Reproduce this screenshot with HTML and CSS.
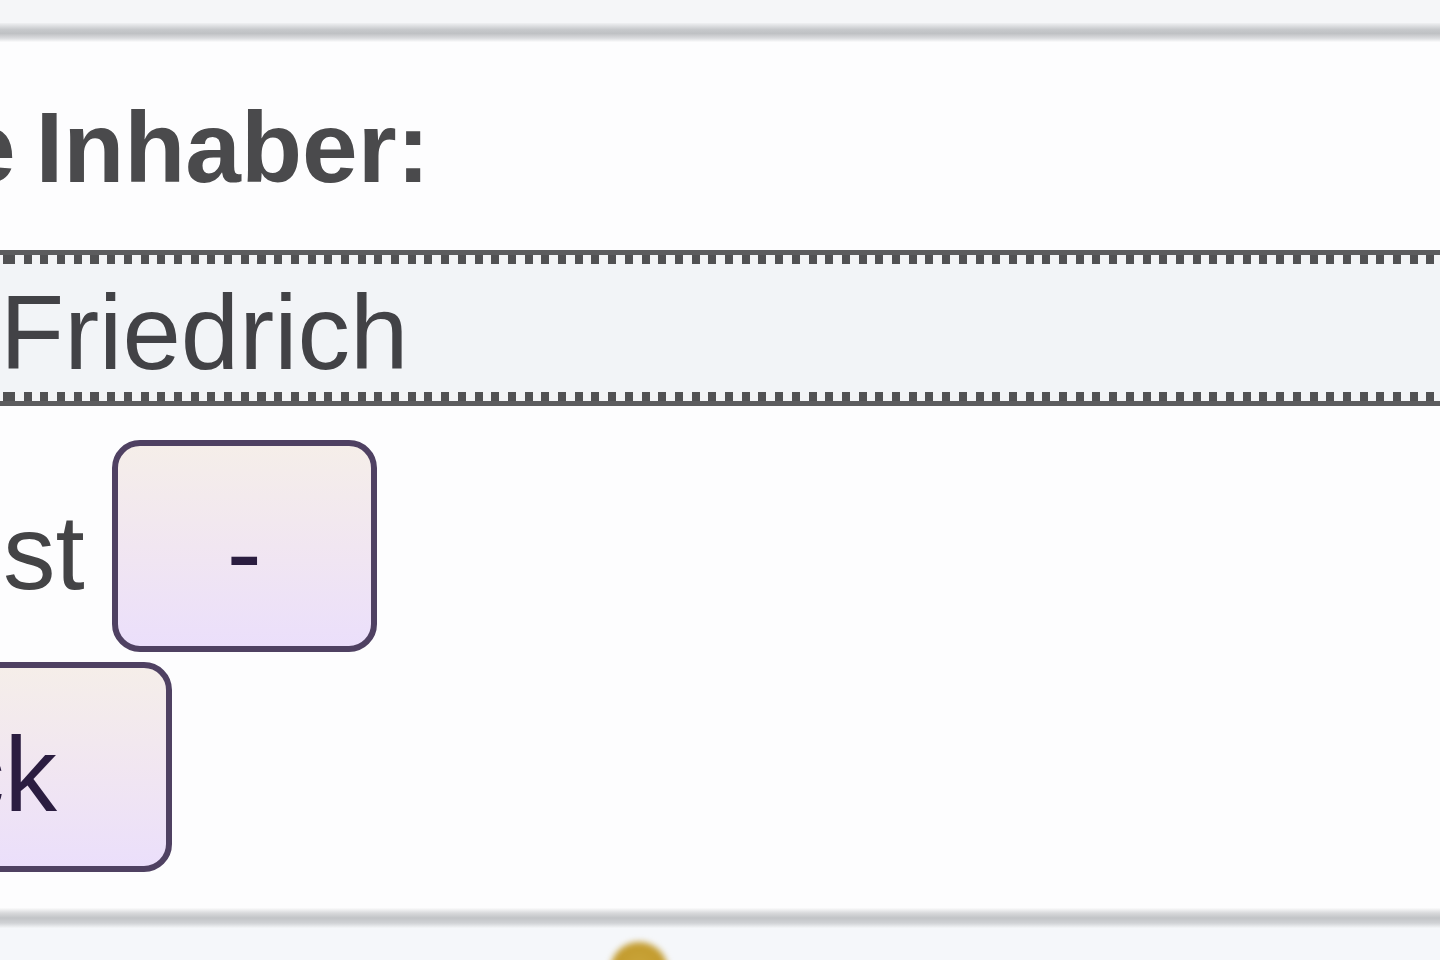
FILE: index.html
```html
<!DOCTYPE html>
<html lang="de">
<head>
<meta charset="utf-8">
<title>Inhaber</title>
<link rel="stylesheet" href="styles.css">
</head>
<body>
<div class="page">
  <div class="top-band"></div>
  <div class="rule"></div>
  <div class="label"><span class="label-text">e Inhaber:</span></div>
  <div class="field">
    <div class="field-dots"></div>
    <div class="field-value">Friedrich</div>
    <div class="field-dots"></div>
  </div>
  <div class="actions">
    <div class="action-row">
      <span class="action-text">st</span>
      <button class="btn" type="button">-</button>
    </div>
    <div class="action-row">
      <button class="btn btn-back" type="button">ck</button>
    </div>
  </div>
  <div class="rule rule-bottom"></div>
  <div class="footer"><div class="coin"></div></div>
</div>
</body>
</html>
```

FILE: styles.css
```css
html, body {
  margin: 0;
  padding: 0;
  background: #ffffff;
}

body {
  width: 1440px;
  height: 960px;
  overflow: hidden;
  font-family: "Liberation Sans", Arial, sans-serif;
}

.page {
  width: 1440px;
  height: 960px;
  overflow: hidden;
  display: flex;
  flex-direction: column;
  background: #fdfdfe;
}

.top-band {
  height: 23px;
  flex: none;
  background: #f5f6f8;
}

.rule {
  height: 19px;
  flex: none;
  background: linear-gradient(to bottom, #eff0f2 0%, #c6c8cb 35%, #bfc1c4 55%, #dadbde 80%, #fbfbfc 100%);
}

.label {
  height: 208px;
  flex: none;
  box-sizing: border-box;
  padding-top: 49px;
  white-space: nowrap;
  overflow: hidden;
}

.label-text {
  display: inline-block;
  margin-left: -40px;
  font-size: 100px;
  line-height: 112px;
  font-weight: bold;
  color: #4a4a4c;
  word-spacing: -8px;
}

.field {
  flex: none;
  border-top: 5px solid #5c5c5e;
  border-bottom: 5px solid #5c5c5e;
}

.field-dots {
  height: 9px;
  background-color: #f3f4f6;
  background-image: repeating-linear-gradient(90deg, #515153 0 8px, transparent 8px 16.7px);
  background-position: 7px 0;
}

.field-value {
  height: 128px;
  box-sizing: border-box;
  padding-top: 9px;
  font-size: 105px;
  line-height: 120px;
  color: #424246;
  background: #f2f4f7;
  white-space: nowrap;
}

.actions {
  flex: none;
  margin-top: 34px;
  display: flex;
  flex-direction: column;
  gap: 10px;
}

.action-row {
  display: flex;
  align-items: baseline;
  gap: 27px;
  white-space: nowrap;
}

.action-text {
  margin-left: 3px;
  font-size: 105px;
  line-height: 110px;
  color: #444446;
}

.btn {
  flex: none;
  margin: 0;
  font-family: "Liberation Sans", Arial, sans-serif;
  font-size: 105px;
  line-height: 110px;
  color: #2b1d40;
  padding: 52px 109px 38px;
  border: 6px solid #4f4162;
  border-radius: 28px;
  background: linear-gradient(to bottom, #f5eee9 0%, #f1e6f1 50%, #ebdffb 100%);
}

.btn-back {
  margin-left: -163px;
  padding-bottom: 36px;
}

.rule-bottom {
  margin-top: 36px;
  height: 20px;
  background: linear-gradient(to bottom, #fbfbfc 0%, #d8d9db 25%, #c2c4c7 50%, #d0d2d5 75%, #f4f6f8 100%);
}

.footer {
  flex: 1;
  background: #f5f7fa;
  padding-top: 14px;
  padding-left: 610px;
}

.coin {
  width: 58px;
  height: 58px;
  border-radius: 50%;
  background: radial-gradient(circle at 50% 40%, #c9a43a 0%, #c29a2c 55%, #d8c27c 100%);
  filter: blur(3px);
}
```
